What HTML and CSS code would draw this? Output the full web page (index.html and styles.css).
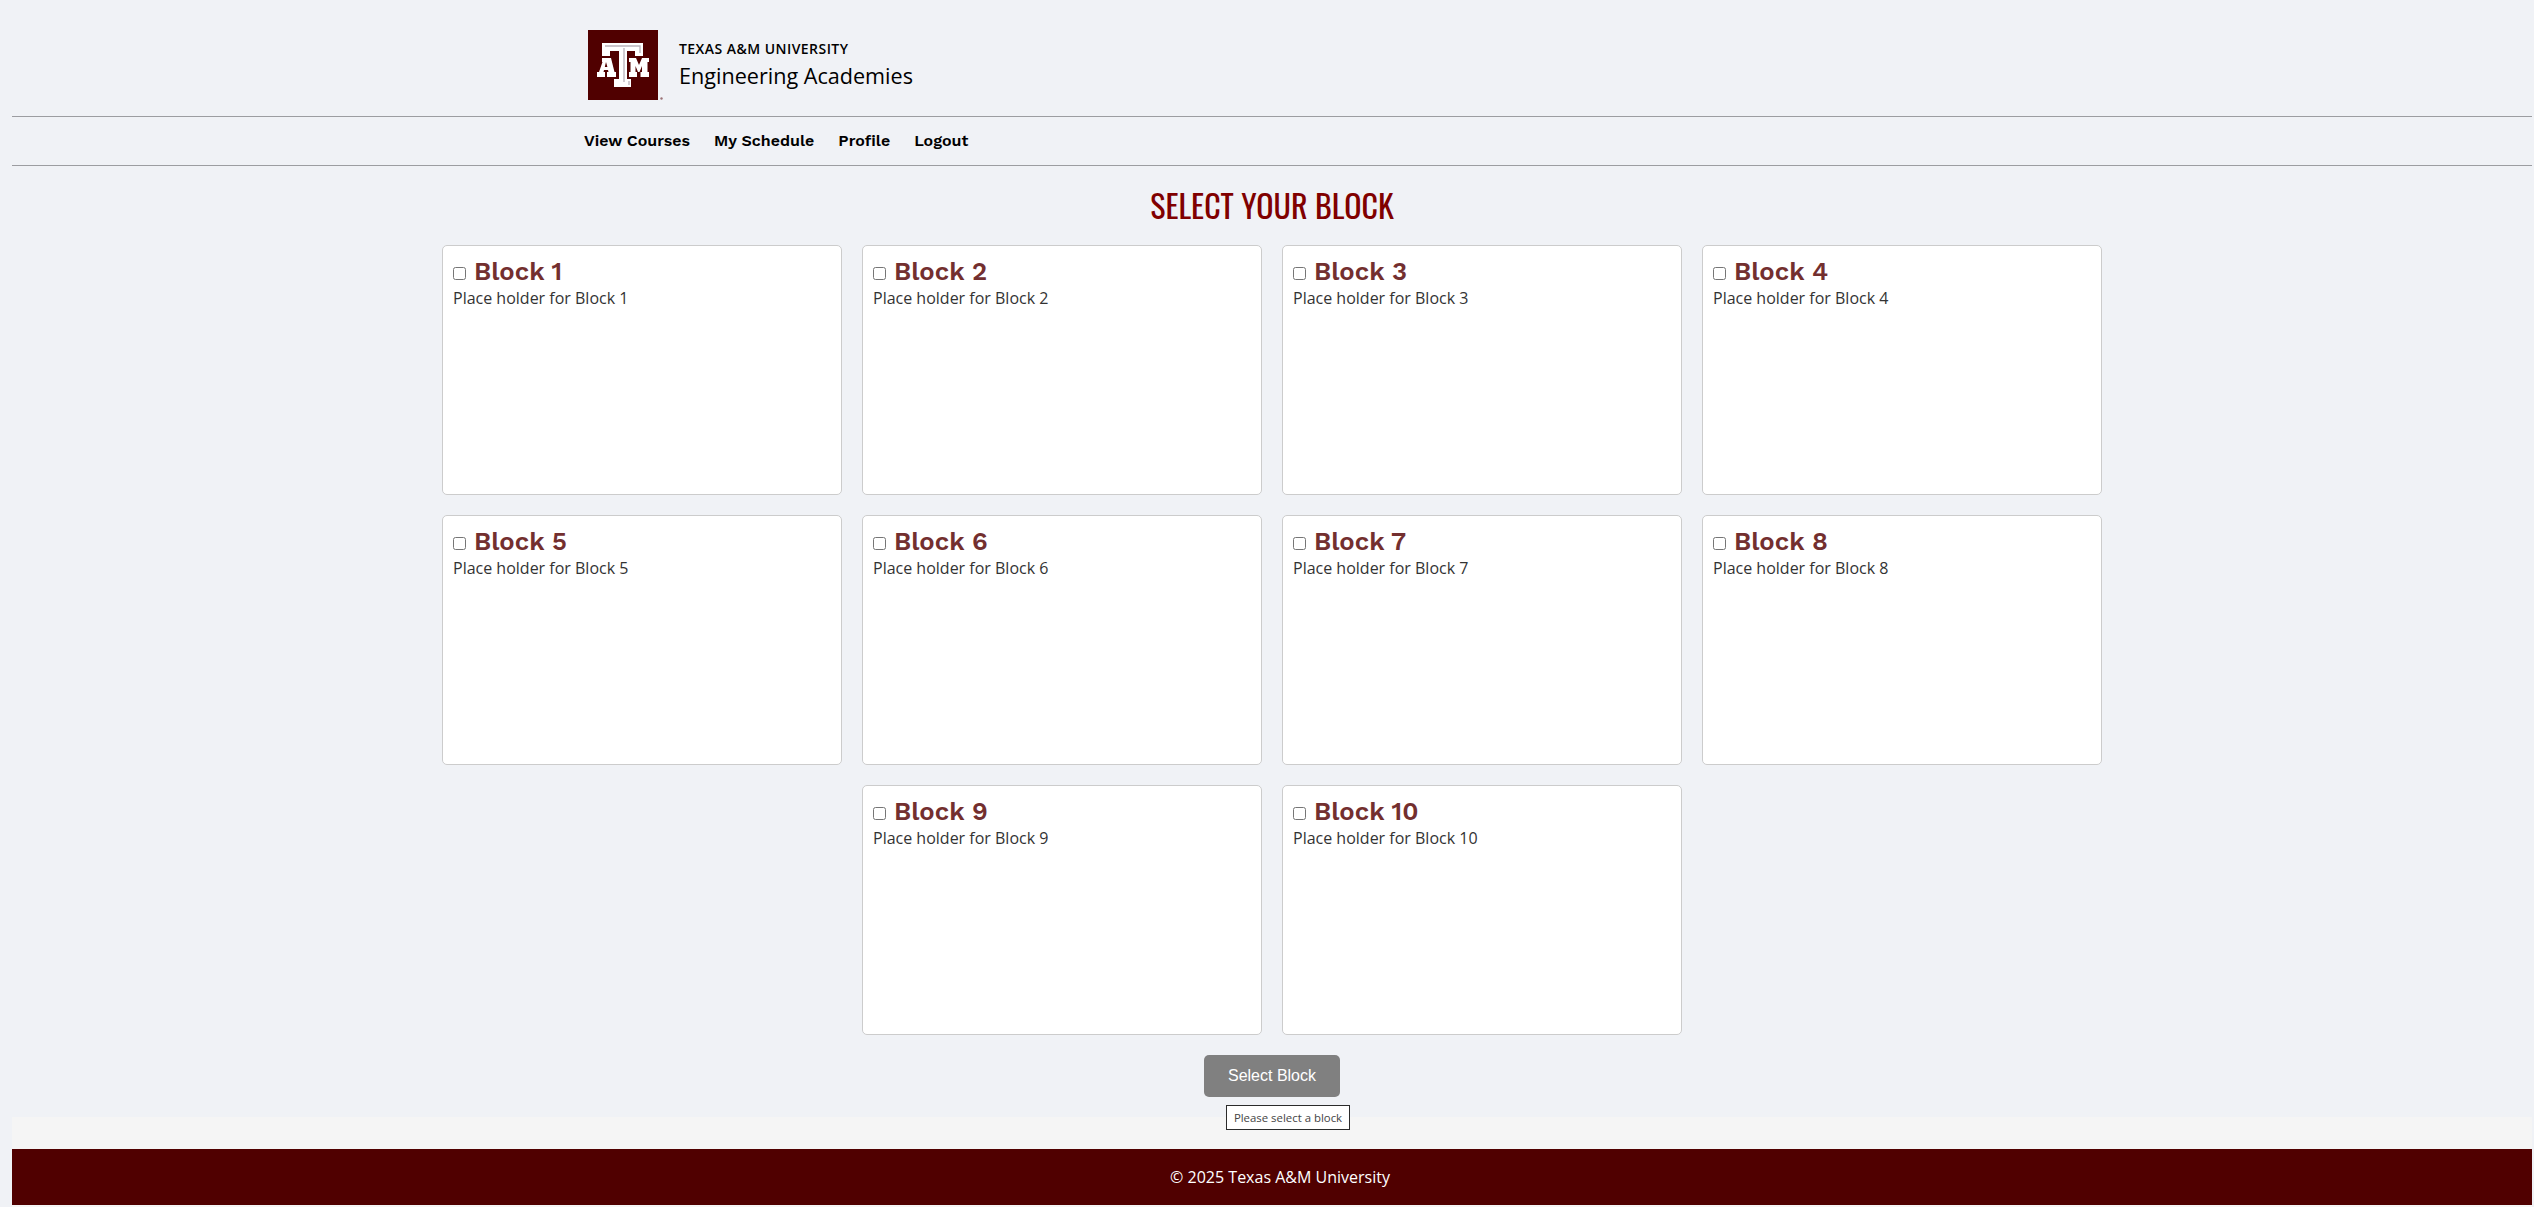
FILE: index.html
```html
<!DOCTYPE html>
<html lang="en">
<head>
<meta charset="utf-8">
<title>Select Your Block</title>
<link rel="stylesheet" href="styles.css">
</head>
<body>
<header class="brand">
  <svg class="logo" viewBox="0 0 76 70" role="img" aria-label="Texas A&amp;M">
    <rect width="70" height="70" fill="#500000"/>
    <g fill="#fff">
      <path d="M14 13H55V26H47V21H39V49H43V57H26V49H31V21H22V26H14Z"/>
      <path fill-rule="evenodd" d="M14 28H23L26.500 42H28V47H19V42H20.500L20 40H16L15.500 42H17V47H9V42H11L14.500 32H14ZM18 32L16.800 37H19.400Z"/>
      <path d="M41 28H48L51 35L54 28H61V32H59.500V42H61V47H52.500V42H54V36L51.500 42H50L47.500 36V42H49V47H41V42H42.500V32H41Z"/>
    </g>
    <path d="M17 16H52V23M36 18V52M41 51V55" fill="none" stroke="#b9b2ba" stroke-width="1.300"/>
    <circle cx="73.500" cy="68.500" r="1.200" fill="#9b7478"/>
  </svg>
  <div class="brand-text">
    <div class="university">TEXAS A&amp;M UNIVERSITY</div>
    <div class="program">Engineering Academies</div>
  </div>
</header>
<nav class="menu">
  <a class="link">View Courses</a>
  <a class="link">My Schedule</a>
  <a class="link">Profile</a>
  <a class="link">Logout</a>
</nav>
<main class="content">
  <h1 class="title">SELECT YOUR BLOCK</h1>
  <div class="blocks">
    <section class="card"><label class="name"><input type="checkbox" class="check"><span>Block 1</span></label><p class="note">Place holder for Block 1</p></section>
    <section class="card"><label class="name"><input type="checkbox" class="check"><span>Block 2</span></label><p class="note">Place holder for Block 2</p></section>
    <section class="card"><label class="name"><input type="checkbox" class="check"><span>Block 3</span></label><p class="note">Place holder for Block 3</p></section>
    <section class="card"><label class="name"><input type="checkbox" class="check"><span>Block 4</span></label><p class="note">Place holder for Block 4</p></section>
    <section class="card"><label class="name"><input type="checkbox" class="check"><span>Block 5</span></label><p class="note">Place holder for Block 5</p></section>
    <section class="card"><label class="name"><input type="checkbox" class="check"><span>Block 6</span></label><p class="note">Place holder for Block 6</p></section>
    <section class="card"><label class="name"><input type="checkbox" class="check"><span>Block 7</span></label><p class="note">Place holder for Block 7</p></section>
    <section class="card"><label class="name"><input type="checkbox" class="check"><span>Block 8</span></label><p class="note">Place holder for Block 8</p></section>
    <section class="card"><label class="name"><input type="checkbox" class="check"><span>Block 9</span></label><p class="note">Place holder for Block 9</p></section>
    <section class="card"><label class="name"><input type="checkbox" class="check"><span>Block 10</span></label><p class="note">Place holder for Block 10</p></section>
  </div>
  <div class="action">
    <button class="submit">Select Block</button>
    <div class="tip">Please select a block</div>
  </div>
</main>
<footer class="footer">© 2025 Texas A&amp;M University</footer>
</body>
</html>
```

FILE: styles.css
```css
* { box-sizing: border-box; }
html { background: #f0f2f6; }
body {
  margin: 0 2px 0 12px;
  height: 1207px;
  overflow: hidden;
  background: #f5f5f5;
  font-family: "Open Sans", "Noto Sans", sans-serif;
  font-size: 16px;
}
.brand {
  display: flex;
  gap: 15px;
  height: 117px;
  padding: 30px 0 0 576px;
  background: #f0f2f6;
  border-bottom: 1px solid #9c9da1;
}
.logo { width: 76px; height: 70px; }
.brand-text { padding-top: 9px; color: #000; }
.university { font-size: 14px; font-weight: 600; line-height: 20px; letter-spacing: 0.45px; white-space: nowrap; }
.program { font-size: 21.6px; line-height: 33px; white-space: nowrap; }
.menu {
  display: flex;
  align-items: center;
  gap: 24px;
  height: 49px;
  padding: 0 0 2px 572px;
  background: #f0f2f6;
  border-bottom: 1px solid #9c9da1;
}
.link {
  font-family: "Work Sans", Inter, sans-serif;
  font-size: 16px;
  font-weight: 600;
  color: #000;
  white-space: nowrap;
}
.content { height: 951px; background: #f0f2f6; }
.title {
  margin: 0;
  height: 79px;
  padding-top: 15px;
  font-family: Oswald, "Liberation Sans Narrow", "Open Sans", sans-serif;
  font-size: 32px;
  font-weight: 400;
  line-height: 48px;
  color: #800000;
  text-align: center;
}
.blocks { display: flex; flex-wrap: wrap; justify-content: center; gap: 20px; width: 1660px; margin: 0 auto; }
.card {
  width: 400px;
  height: 250px;
  padding: 10px;
  background: #fff;
  border: 1px solid #ccc;
  border-radius: 5px;
}
.name {
  display: flex;
  gap: 8px;
  height: 30px;
  font-family: "Work Sans", Inter, sans-serif;
  font-size: 25.6px;
  font-weight: 600;
  line-height: 30px;
  color: #732f2f;
}
.check { width: 13px; height: 13px; margin: 11px 0 0; }
.note { margin: 0; line-height: 24px; color: #333; }
.action { position: relative; width: 136px; margin: 20px auto 0; }
.submit {
  display: block;
  width: 136px;
  height: 42px;
  padding: 0;
  border: 0;
  border-radius: 5px;
  background: #808080;
  color: #fff;
  font: 16px "Liberation Sans", Arial, sans-serif;
}
.tip {
  position: absolute;
  left: 22px;
  top: 50px;
  width: 124px;
  height: 25px;
  border: 1px solid #2b2b2b;
  background: #fff;
  color: #444;
  font: 11.4px/23px "Open Sans", sans-serif;
  text-align: center;
  white-space: nowrap;
}
.footer {
  height: 56px;
  margin-top: 32px;
  padding-left: 16px;
  background: #500000;
  color: #fff;
  line-height: 56px;
  text-align: center;
}
```
